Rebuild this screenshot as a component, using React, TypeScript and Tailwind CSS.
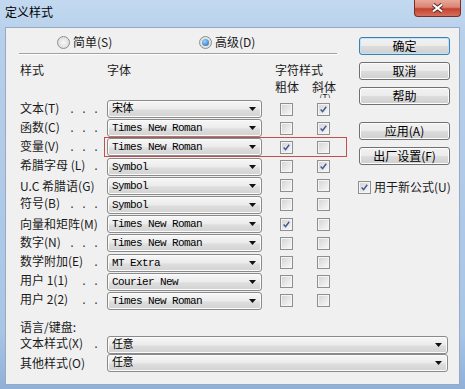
const cjk = "font-['Noto_Sans_CJK_SC',sans-serif]";
const mono = "font-['Liberation_Mono','Noto_Sans_CJK_SC',monospace]";

const rows = [
  { label: "文本(T)", dots: ". . .", font: "宋体", b: false, i: true },
  { label: "函数(C)", dots: ". . .", font: "Times New Roman", b: false, i: true },
  { label: "变量(V)", dots: ". . .", font: "Times New Roman", b: true, i: false, mark: true },
  { label: "希腊字母 (L)", dots: ".", font: "Symbol", b: false, i: true },
  { label: "U.C 希腊语(G)", dots: "", font: "Symbol", b: false, i: false },
  { label: "符号(B)", dots: ". . .", font: "Symbol", b: false, i: false },
  { label: "向量和矩阵(M)", dots: "", font: "Times New Roman", b: true, i: false },
  { label: "数字(N)", dots: ". . .", font: "Times New Roman", b: false, i: false },
  { label: "数学附加(E)", dots: ".", font: "MT Extra", b: false, i: false },
  { label: "用户 1(1)", dots: ". .", font: "Courier New", b: false, i: false },
  { label: "用户 2(2)", dots: ". .", font: "Times New Roman", b: false, i: false },
];

function Check({ on }: { on?: boolean }) {
  return (
    <div className="w-[13px] h-[13px] shrink-0 border border-[#8e8f8f] bg-[#f4f4f4] p-[1px]">
      <div className="w-full h-full bg-[linear-gradient(135deg,#d6d6d6,#f6f6f6)] flex items-center justify-center">
        {on && (
          <svg width="11" height="11" viewBox="0 0 11 11">
            <path d="M2 5.6 L4.4 8.2 L8.8 2.2" fill="none" stroke="#3f5a94" strokeWidth="1.8" />
          </svg>
        )}
      </div>
    </div>
  );
}

function Radio({ on }: { on?: boolean }) {
  return (
    <div className="w-[13px] h-[13px] shrink-0 rounded-full border border-[#8e8f8f] bg-[radial-gradient(circle,#f8f8f8,#d4d4d4)] flex items-center justify-center">
      {on && <div className="w-[7px] h-[7px] rounded-full bg-[radial-gradient(circle_at_40%_35%,#9ad6ff,#1a5fae)]" />}
    </div>
  );
}

function Arrow() {
  return (
    <svg width="7" height="4" viewBox="0 0 7 4" className="shrink-0">
      <polygon points="0,0 7,0 3.5,4" fill="#111" />
    </svg>
  );
}

function Combo({ text, w }: { text: string; w: string }) {
  return (
    <div
      className={`${w} h-[18px] shrink-0 rounded-[3px] border border-[#8a8a8a] bg-[linear-gradient(#f7f7f7,#ebebeb_50%,#dedede_55%,#d2d2d2)] shadow-[inset_0_0_0_1px_#fbfbfb] flex items-center pl-[4px] pr-[5px]`}
    >
      <span className={`${mono} text-[11px] tracking-[-0.6px] leading-[14px] text-black flex-1 whitespace-nowrap`}>{text}</span>
      <Arrow />
    </div>
  );
}

function Btn({ children, main }: { children: string; main?: boolean }) {
  return (
    <div
      className={`w-[91px] h-[18px] rounded-[3px] border ${
        main ? "border-[#3c7fb1] shadow-[inset_0_0_0_1px_#bfe3f7]" : "border-[#707070] shadow-[inset_0_0_0_1px_#fcfcfc]"
      } bg-[linear-gradient(#f2f2f2,#ebebeb_50%,#dddddd_50%,#cfcfcf)] flex items-center justify-center text-[12px] leading-[14px] text-black`}
    >
      {children}
    </div>
  );
}

export default function App() {
  return (
    <div className={`${cjk} w-[465px] h-[389px] flex flex-col overflow-hidden bg-[linear-gradient(#c3d9f1,#b6cfea_10%,#a9c5e6_85%,#8fb0d8)] text-[#1a1a1a]`}>
      {/* title bar */}
      <div className="h-[27px] shrink-0 flex items-start">
        <div className="pl-[5px] pt-[5px] text-[12px] leading-[14px] text-black">定义样式</div>
        <div className="ml-auto mr-[4px] w-[47px] h-[17px] rounded-b-[4px] border border-t-0 border-[#7a2e25] bg-[linear-gradient(#e8a899,#d98575_45%,#c7412e_55%,#d2705e)] flex items-center justify-center">
          <svg width="13" height="10" viewBox="0 0 13 10">
            <path d="M2 1.5 L11 8.5 M11 1.5 L2 8.5" stroke="#5b2a24" strokeWidth="4" />
            <path d="M2 1.5 L11 8.5 M11 1.5 L2 8.5" stroke="#fff" strokeWidth="2.2" />
          </svg>
        </div>
      </div>

      {/* client */}
      <div className="mx-[5px] h-[358px] shrink-0 border border-[#97aac2] bg-[#f0f0f0] flex flex-col">
        <div className="flex">
          {/* left */}
          <div className="w-[353px] shrink-0 pl-[14px] flex flex-col">
            <div className="mt-[7px] h-[14px] flex items-center text-[12px] leading-[14px]">
              <div className="ml-[37px] w-[142px] flex items-center gap-[3px]">
                <Radio />
                <span>简单(S)</span>
              </div>
              <div className="flex items-center gap-[3px]">
                <Radio on />
                <span>高级(D)</span>
              </div>
            </div>
            <div className="mt-[4px] ml-[-1px] w-[318px] h-[2px] border-t border-[#a0a0a0] border-b border-b-white" />

            {/* headers */}
            <div className="h-[45px] flex text-[12px] leading-[14px]">
              <div className="w-[87px] pt-[8px]">样式</div>
              <div className="w-[168px] pt-[8px]">字体</div>
              <div className="flex flex-col pt-[8px]">
                <div>字符样式</div>
                <div className="mt-[4px] flex">
                  <div className="leading-[12px]">粗体</div>
                  <div className="ml-[13px] flex flex-col items-center">
                    <div className="leading-[12px]">斜体</div>
                    <div className="h-[5px] overflow-hidden text-[9px] leading-[9px] ml-[2px]">(T)</div>
                  </div>
                </div>
              </div>
            </div>

            {/* rows */}
            <div className="flex flex-col gap-[1.2px]">
              {rows.map((r) => (
                <div key={r.label} className="relative h-[18px] flex items-center">
                  <div className="w-[87px] shrink-0 pr-[8px] flex items-baseline text-[12px] leading-[14px]">
                    <span className="whitespace-nowrap">{r.label}</span>
                    <span className={`${mono} ml-auto text-[10px] whitespace-pre`}>{r.dots}</span>
                  </div>
                  <Combo text={r.font} w="w-[155px]" />
                  <div className="ml-[18px]">
                    <Check on={r.b} />
                  </div>
                  <div className="ml-[24px]">
                    <Check on={r.i} />
                  </div>
                  {r.mark && (
                    <div className="absolute left-[84px] top-[-1px] w-[243px] h-[20px] border border-[#c0504d]" />
                  )}
                </div>
              ))}
            </div>
          </div>

          {/* right buttons */}
          <div className="w-[91px] shrink-0 flex flex-col pt-[9px]">
            <Btn main>确定</Btn>
            <div className="mt-[7px]">
              <Btn>取消</Btn>
            </div>
            <div className="mt-[7px]">
              <Btn>帮助</Btn>
            </div>
            <div className="mt-[17px]">
              <Btn>应用(A)</Btn>
            </div>
            <div className="mt-[7px]">
              <Btn>出厂设置(F)</Btn>
            </div>
            <div className="mt-[15px] ml-[-1px] flex items-center gap-[3px] text-[12px] leading-[14px]">
              <Check on />
              <span className="whitespace-nowrap">用于新公式(U)</span>
            </div>
          </div>
        </div>

        {/* bottom */}
        <div className="pl-[14px] flex flex-col">
          <div className="mt-[10px] text-[12px] leading-[14px]">语言/键盘:</div>
          <div className="mt-[2px] h-[18px] flex items-center">
            <div className="w-[87px] shrink-0 pr-[8px] flex items-baseline text-[12px] leading-[14px]">
              <span className="whitespace-nowrap">文本样式(X)</span>
              <span className={`${mono} ml-auto text-[10px]`}>.</span>
            </div>
            <Combo text="任意" w="w-[341px]" />
          </div>
          <div className="h-[18px] flex items-center">
            <div className="w-[87px] shrink-0 text-[12px] leading-[14px] whitespace-nowrap">其他样式(O)</div>
            <Combo text="任意" w="w-[341px]" />
          </div>
        </div>
      </div>
    </div>
  );
}
